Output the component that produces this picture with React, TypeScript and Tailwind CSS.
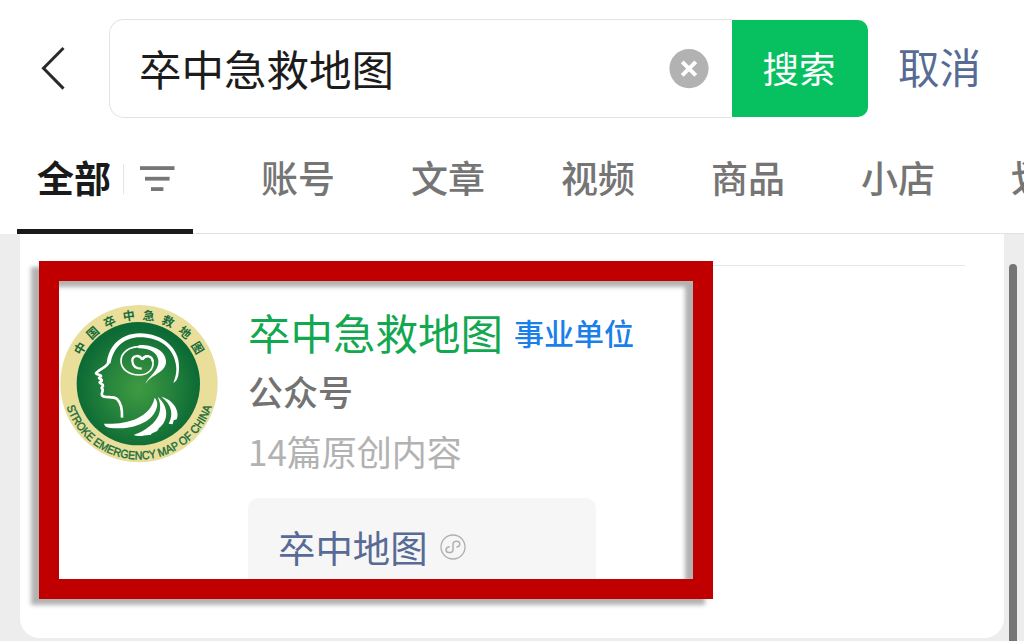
const tabs = ['账号', '文章', '视频', '商品', '小店', '划线'];
const ring = ['中', '国', '卒', '中', '急', '救', '地', '图'];

function BackIcon() {
  return (
    <svg className="h-[46px] w-[26px]" viewBox="0 0 26 46" fill="none" stroke="#2a2a2a" strokeWidth="3">
      <path d="M23.5 2 3.5 22.2 23.5 42.6" />
    </svg>
  );
}

function ClearIcon() {
  return (
    <svg className="h-10 w-10" viewBox="0 0 40 40">
      <circle cx="20" cy="19.6" r="19.6" fill="#b2b2b2" />
      <path d="M13.2 12.8 26.8 26.4M26.8 12.8 13.2 26.4" stroke="#fff" strokeWidth="4" />
    </svg>
  );
}

function FilterIcon() {
  return (
    <svg className="h-[26px] w-[35px]" viewBox="0 0 35 26" fill="#767676">
      <rect x="0" y="0.2" width="34.5" height="3.8" />
      <rect x="5" y="10.8" width="24.6" height="3.8" />
      <rect x="11" y="21.2" width="12.4" height="3.8" />
    </svg>
  );
}

function MiniProgramIcon() {
  return (
    <svg className="h-[26px] w-[26px]" viewBox="0 0 26 26" fill="none" stroke="#b0b0b0" strokeLinecap="round">
      <circle cx="13" cy="13" r="12" strokeWidth="1.3" />
      <path
        d="M9.2 12.7C7 13.2 6 14.4 6 15.8C6 17.6 7.3 18.6 9.1 18.6C11.3 18.6 13 17.3 13 15.4V10.4C13 8.4 14.7 7.2 16.6 7.2C18.5 7.2 19.8 8.3 19.8 10C19.8 11.6 18.8 12.6 17 13"
        strokeWidth="1.5"
      />
    </svg>
  );
}

function Emblem() {
  return (
    <svg className="h-40 w-40 shrink-0" viewBox="27 27 480 480">
      <defs>
        <radialGradient id="disc" cx="0.5" cy="0.54" r="0.5">
          <stop offset="0" stopColor="#3f9b41" />
          <stop offset="0.55" stopColor="#24823c" />
          <stop offset="1" stopColor="#0c6a35" />
        </radialGradient>
        <path id="arc" d="M49.5 335A229 229 0 0 0 488 326" />
      </defs>
      <circle cx="267" cy="266" r="236" fill="#e9df9b" />
      <circle cx="265" cy="266" r="185" fill="url(#disc)" />
      <g fill="#176c3a" fontFamily="'Noto Sans CJK SC', sans-serif" fontSize="36" fontWeight="700" textAnchor="middle">
        {ring.map((c, i) => (
          <text key={i} x="267" y="73" transform={`rotate(${-59 + i * 16.8} 267 266)`}>
            {c}
          </text>
        ))}
      </g>
      <text fill="#176c3a" stroke="#176c3a" strokeWidth="1.2" fontFamily="'Liberation Sans', sans-serif" fontSize="35">
        <textPath href="#arc" textLength="576" lengthAdjust="spacingAndGlyphs">
          STROKE EMERGENCY MAP OF CHINA
        </textPath>
      </text>
      <g fill="#fff">
        <path d="M170 205C176 150 215 116 268 115C336 114 390 160 387 218C386 240 385 255 370 264C379 240 381 225 377 205C368 155 325 127 270 127C225 127 190 155 182 205Z" />
        <path d="M287 266C292 246 328 230 325 196C322 172 298 160 268 160C262 160 262 152 270 150C312 150 346 168 348 198C350 232 304 238 287 266Z" />
        <path d="M162 386C225 389 300 372 314 308C323 318 324 330 318 344C300 392 226 404 182 399C170 398 163 393 162 386Z" />
        <path d="M323 305C358 335 356 378 326 400C326 412 304 412 302 420C284 418 272 428 251 420C300 402 350 362 323 305Z" />
        <path d="M334 305C374 316 390 352 380 373L371 376L368 388L356 386C372 356 364 328 334 305Z" />
      </g>
      <g fill="none" stroke="#fff" strokeLinejoin="round">
        <path
          d="M272 155C238 154 213 172 213 198C213 223 238 240 267 240C294 240 311 223 309 201C307 181 286 178 277 192"
          strokeWidth="5"
        />
        <path d="M277 194C268 177 246 181 247 198C248 213 259 221 275 221" strokeWidth="7" />
        <path d="M277 194C286 178 307 182 308 200" strokeWidth="7" />
        <path
          d="M177 200C172 218 146 222 138 235C142 241 153 238 153 244L147 249C151 253 157 253 155 258L149 262C151 268 160 266 159 272L155 279C164 286 152 293 156 301C164 311 188 302 201 312C214 324 217 342 216 368"
          strokeWidth="8"
        />
      </g>
    </svg>
  );
}

export default function App() {
  return (
    <div className="flex h-[641px] w-[1024px] flex-col overflow-hidden bg-white font-['Noto_Sans_CJK_SC',sans-serif] leading-none whitespace-nowrap">
      <header className="flex h-[234px] shrink-0 flex-col pt-[19px]">
        <div className="flex h-[99px] shrink-0 items-center">
          <button className="ml-10 flex">
            <BackIcon />
          </button>
          <div className="ml-[43px] flex h-[99px] w-[623px] items-center justify-between rounded-l-[15px] border border-r-0 border-[#e3e3e3] pr-[23px] pl-[29px]">
            <span className="pb-px text-[42.5px] font-normal text-[#1c1c1c]">卒中急救地图</span>
            <ClearIcon />
          </div>
          <button className="h-[97px] w-[136px] rounded-r-[10px] bg-[#07c160] pr-0.5 text-[36.5px] text-white">搜索</button>
          <button className="ml-[30px] pb-1 text-[41.5px] text-[#576b95]">取消</button>
        </div>
        <nav className="flex flex-1 text-[37px] font-medium text-[#757575]">
          <div className="ml-[17px] flex w-44 shrink-0 items-center border-b-[5px] border-[#1a1a1a] pt-[11px] pl-5">
            <span className="pb-1 font-bold text-[#1a1a1a]">全部</span>
            <span className="ml-3 h-[30px] w-px bg-[#e5e5e5]" />
            <span className="ml-4">
              <FilterIcon />
            </span>
          </div>
          <div className="flex flex-1 items-center overflow-hidden border-b border-[#e2e2e2] pt-[3px] pl-[68px]">
            {tabs.map((t) => (
              <span key={t} className="w-[150px] shrink-0">
                {t}
              </span>
            ))}
          </div>
        </nav>
      </header>

      <main className="relative flex flex-1 bg-[#ededed] pl-5">
        <section className="h-[404px] w-[984px] rounded-b-[20px] bg-white pt-[31px]">
          <div className="mr-[39px] ml-5 h-px bg-[#e6e6e6]" />
          <article className="flex h-[313px] overflow-hidden pt-[38px] pl-[39px]">
            <Emblem />
            <div className="ml-[29px] flex flex-col">
              <div className="flex h-14 shrink-0 items-center gap-[11px]">
                <h2 className="text-[42.5px] text-[#12a850]">卒中急救地图</h2>
                <span className="text-[30px] font-medium text-[#1a7fe8]">事业单位</span>
              </div>
              <p className="flex h-[60px] shrink-0 items-center text-[35px] font-medium text-[#737373]">公众号</p>
              <p className="flex h-[60px] shrink-0 items-center text-[35px] text-[#b2b2b2]">14篇原创内容</p>
              <div className="mt-[18px] flex h-[130px] w-[348px] shrink-0 items-start rounded-[10px] bg-[#f6f6f6] pt-[31px] pl-[30px]">
                <span className="text-[37.4px] text-[#576b95]">卒中地图</span>
                <span className="mt-[5px] ml-3">
                  <MiniProgramIcon />
                </span>
              </div>
            </div>
          </article>
        </section>
        <div className="mt-[30px] ml-[5px] w-2 rounded-t-full bg-[#757575]" />
        <div className="absolute top-[27px] left-[39px] h-[338px] w-[674px] border-20 border-[#c00000] drop-shadow-[-8px_6px_2px_rgba(0,0,0,0.3)]" />
      </main>
    </div>
  );
}
